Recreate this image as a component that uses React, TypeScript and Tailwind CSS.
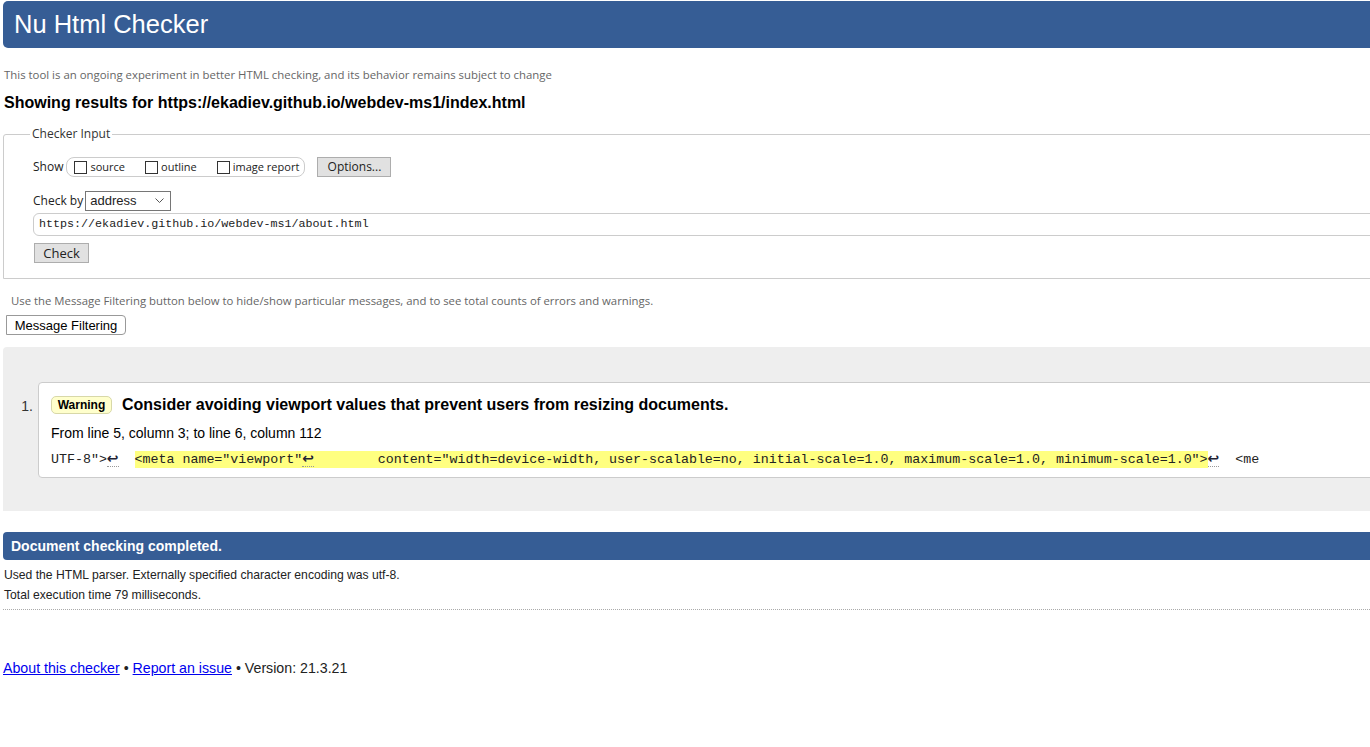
import React from 'react'

const sans = "font-['Liberation_Sans',Arial,sans-serif]"
const ui = "font-['Open_Sans','Noto_Sans',sans-serif]"

function Lf() {
  return (
    <span className="border-b border-dotted border-[#999] font-['DejaVu_Sans',sans-serif] text-[14px] font-bold text-[#223]">↩</span>
  )
}

function Box({ label }: { label: string }) {
  return (
    <span className="flex items-center gap-[3px]">
      <span className="inline-block h-[13px] w-[13px] border border-[#333] bg-white" />
      <span>{label}</span>
    </span>
  )
}

export default function App() {
  return (
    <div className={`h-[747px] w-[1370px] overflow-hidden bg-white text-[#222] ${sans}`}>
      <div className="w-[1440px]">
        {/* Header */}
        <div className="ml-[3px] mt-[1px] h-[47px] rounded-[5px] bg-[#365d95] pl-[11px] text-[25.5px] leading-[47px] text-white">
          Nu Html Checker
        </div>

        <p className={`ml-[4px] mt-[19px] text-[11.4px] leading-[15px] text-[#666] ${ui}`}>
          This tool is an ongoing experiment in better HTML checking, and its behavior remains subject to change
        </p>
        <h2 className="ml-[4px] mt-[11px] text-[16px] font-bold leading-[20px] text-black">
          Showing results for https://ekadiev.github.io/webdev-ms1/index.html
        </h2>

        {/* Checker input */}
        <fieldset className={`ml-[3px] mt-[14px] h-[152px] rounded-tl-[3px] border border-[#ccc] pl-[29px] ${ui}`}>
          <legend className="ml-[-3px] px-[2px] text-[12px] leading-[14px] text-[#333]">Checker Input</legend>
          <div className="mt-[16px] flex items-center text-[12px]">
            <span className="mr-[3px]">Show</span>
            <div className="flex h-[20px] w-[239px] items-center gap-[20px] rounded-[8px] border border-[#ccc] pl-[7px] text-[11px]">
              <Box label="source" />
              <Box label="outline" />
              <Box label="image report" />
            </div>
            <button className="ml-[12px] h-[20px] w-[74px] border border-[#adadad] bg-[#e1e1e1] text-[12px]">
              Options...
            </button>
          </div>
          <div className="mt-[14px] flex items-center text-[12px]">
            <span className="mr-[2px]">Check by</span>
            <div className="flex h-[20px] w-[86px] items-center justify-between border border-[#767676] pl-[4px] pr-[6px] text-[13px]">
              <span className={sans}>address</span>
              <svg width="9" height="6" viewBox="0 0 9 6" fill="none" stroke="#555" strokeWidth="1">
                <path d="M0.5 0.5 L4.5 4.5 L8.5 0.5" />
              </svg>
            </div>
          </div>
          <div className="mt-[2px] flex h-[23px] items-center rounded-[6px] border border-[#ccc] pl-[5px] font-['Liberation_Mono',monospace] text-[11.7px]">
            https://ekadiev.github.io/webdev-ms1/about.html
          </div>
          <button className="ml-[1px] mt-[7px] h-[20px] w-[55px] border border-[#adadad] bg-[#e1e1e1] text-[13px]">
            Check
          </button>
        </fieldset>

        <p className={`ml-[11px] mt-[14px] text-[11.35px] leading-[15px] text-[#666] ${ui}`}>
          Use the Message Filtering button below to hide/show particular messages, and to see total counts of errors and warnings.
        </p>
        <button className="ml-[6px] mt-[7px] h-[20px] w-[120px] rounded-r-[4px] border border-[#999] bg-white text-[13px] text-black">
          Message Filtering
        </button>

        {/* Results */}
        <div className="ml-[3px] mt-[10px] h-[164px] rounded-tl-[4px] bg-[#eeeeee] pt-[35px]">
          <div className="flex">
            <span className="w-[35px] pt-[14px] pr-[5px] text-right text-[14px] text-[#333]">1.</span>
            <div className="h-[96px] flex-1 rounded-[4px] border border-[#ccc] bg-white pl-[12px] pt-[10px]">
              <div className="flex items-center">
                <span className="flex h-[18px] w-[61px] items-center justify-center rounded-[5px] border border-[#d8d8a8] bg-[#ffffcc] text-[12px] font-bold text-black">
                  Warning
                </span>
                <span className="ml-[10px] text-[16px] font-bold text-black">
                  Consider avoiding viewport values that prevent users from resizing documents.
                </span>
              </div>
              <p className="mt-[7px] text-[14px] leading-[18px] text-black">From line 5, column 3; to line 6, column 112</p>
              <p className="mt-[7px] whitespace-pre font-['Liberation_Mono',monospace] text-[13.3px] leading-[18px]">
                {'UTF-8">'}<Lf />{'  '}
                <span className="bg-[#ffff80] py-[1px]">
                  {'<meta name="viewport"'}<Lf />{'        content="width=device-width, user-scalable=no, initial-scale=1.0, maximum-scale=1.0, minimum-scale=1.0">'}
                </span>
                <Lf />{'  <me'}
              </p>
            </div>
          </div>
        </div>

        {/* Summary */}
        <div className="ml-[3px] mt-[21px] h-[28px] rounded-l-[4px] bg-[#365d95] pl-[8px] text-[14px] font-bold leading-[28px] text-white">
          Document checking completed.
        </div>
        <p className="ml-[4px] mt-[8px] text-[12.15px] leading-[14px]">
          Used the HTML parser. Externally specified character encoding was utf-8.
        </p>
        <p className="ml-[4px] mt-[6px] text-[12.15px] leading-[14px]">Total execution time 79 milliseconds.</p>
        <div className="ml-[3px] mt-[7px] border-t border-dotted border-[#aaa]" />

        {/* Footer */}
        <p className="ml-[3px] mt-[50px] text-[14.2px] leading-[16px]">
          <a href="#" className="text-[#0000ee] underline">About this checker</a> •{' '}
          <a href="#" className="text-[#0000ee] underline">Report an issue</a> • Version: 21.3.21
        </p>
      </div>
    </div>
  )
}
